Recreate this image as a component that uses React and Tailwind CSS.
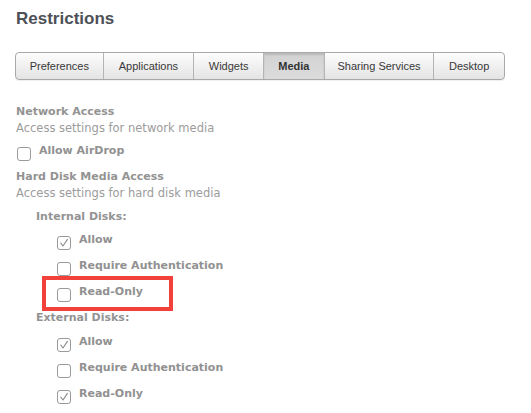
import React from 'react';

const tabs = [
  { label: 'Preferences', w: 'w-[87px]' },
  { label: 'Applications', w: 'w-[91px]' },
  { label: 'Widgets', w: 'w-[70px]' },
  { label: 'Media', w: 'w-[61px]', active: true },
  { label: 'Sharing Services', w: 'w-[110px]' },
  { label: 'Desktop', w: 'w-[71px]' },
];

const Checkbox = ({ checked }) => (
  <span className="mt-[4px] flex h-[14px] w-[14px] shrink-0 items-center justify-center rounded-[3px] border border-[#9a9a9a] bg-white">
    {checked && (
      <svg width="10" height="10" viewBox="0 0 10 10" fill="none">
        <path d="M1.8 5.2 L4 8 L8.4 1.4" stroke="#8a8a8a" strokeWidth="1.1" strokeLinecap="round" strokeLinejoin="round" />
      </svg>
    )}
  </span>
);

const Option = ({ label, checked, className = '' }) => (
  <div className={`flex h-[16px] items-start gap-[8px] ${className}`}>
    <Checkbox checked={checked} />
    <span className="font-bold leading-[16px] text-[#919191]">{label}</span>
  </div>
);

export default function App() {
  return (
    <div className="h-[413px] w-[531px] overflow-hidden bg-white pl-[16px] pt-[9px] text-[11px] font-['DejaVu_Sans',sans-serif]">
      <h1 className="font-['Liberation_Sans',sans-serif] text-[17px] font-bold leading-[20px] text-[#4d5157]">Restrictions</h1>

      {/* tab bar */}
      <div className="ml-[-1px] mt-[23px] flex h-[28px] w-[490px] overflow-hidden rounded-[4px] border border-[#a9a9a9] bg-gradient-to-b from-[#fdfdfd] to-[#e4e4e4] font-['Liberation_Sans',sans-serif] text-[11px] shadow-[0_1px_0_rgba(0,0,0,0.06)]">
        {tabs.map((t, i) => (
          <div
            key={t.label}
            className={`flex items-center justify-center ${t.w} ${i > 0 ? 'border-l border-[#b4b4b4]' : ''} ${
              t.active
                ? 'bg-gradient-to-b from-[#d2d2d2] to-[#dcdcdc] font-bold text-[#333333] shadow-[inset_0_2px_2px_rgba(0,0,0,0.12)]'
                : 'text-[#383838]'
            }`}
          >
            {t.label}
          </div>
        ))}
      </div>

      <div className="mt-[24px] font-bold leading-[16px] text-[#939393]">Network Access</div>
      <div className="text-[11.5px] leading-[16px] text-[#9c9c9c]">Access settings for network media</div>
      <Option label="Allow AirDrop" className="ml-[1px] mt-[7px]" />

      <div className="mt-[10px] font-bold leading-[16px] text-[#939393]">Hard Disk Media Access</div>
      <div className="text-[11.5px] leading-[16px] text-[#9c9c9c]">Access settings for hard disk media</div>

      <div className="ml-[20px] mt-[8px] font-bold leading-[16px] text-[#939393]">Internal Disks:</div>
      <div className="ml-[41px]">
        <Option label="Allow" checked className="mt-[7px]" />
        <Option label="Require Authentication" className="mt-[10px]" />
        <div className="relative mt-[10px]">
          <Option label="Read-Only" />
          <div className="pointer-events-none absolute left-[-15px] top-[-8px] h-[35px] w-[131px] border-[4px] border-[#f2403b]" />
        </div>
      </div>

      <div className="ml-[20px] mt-[10px] font-bold leading-[16px] text-[#939393]">External Disks:</div>
      <div className="ml-[41px]">
        <Option label="Allow" checked className="mt-[8px]" />
        <Option label="Require Authentication" className="mt-[10px]" />
        <Option label="Read-Only" checked className="mt-[10px]" />
      </div>
    </div>
  );
}
